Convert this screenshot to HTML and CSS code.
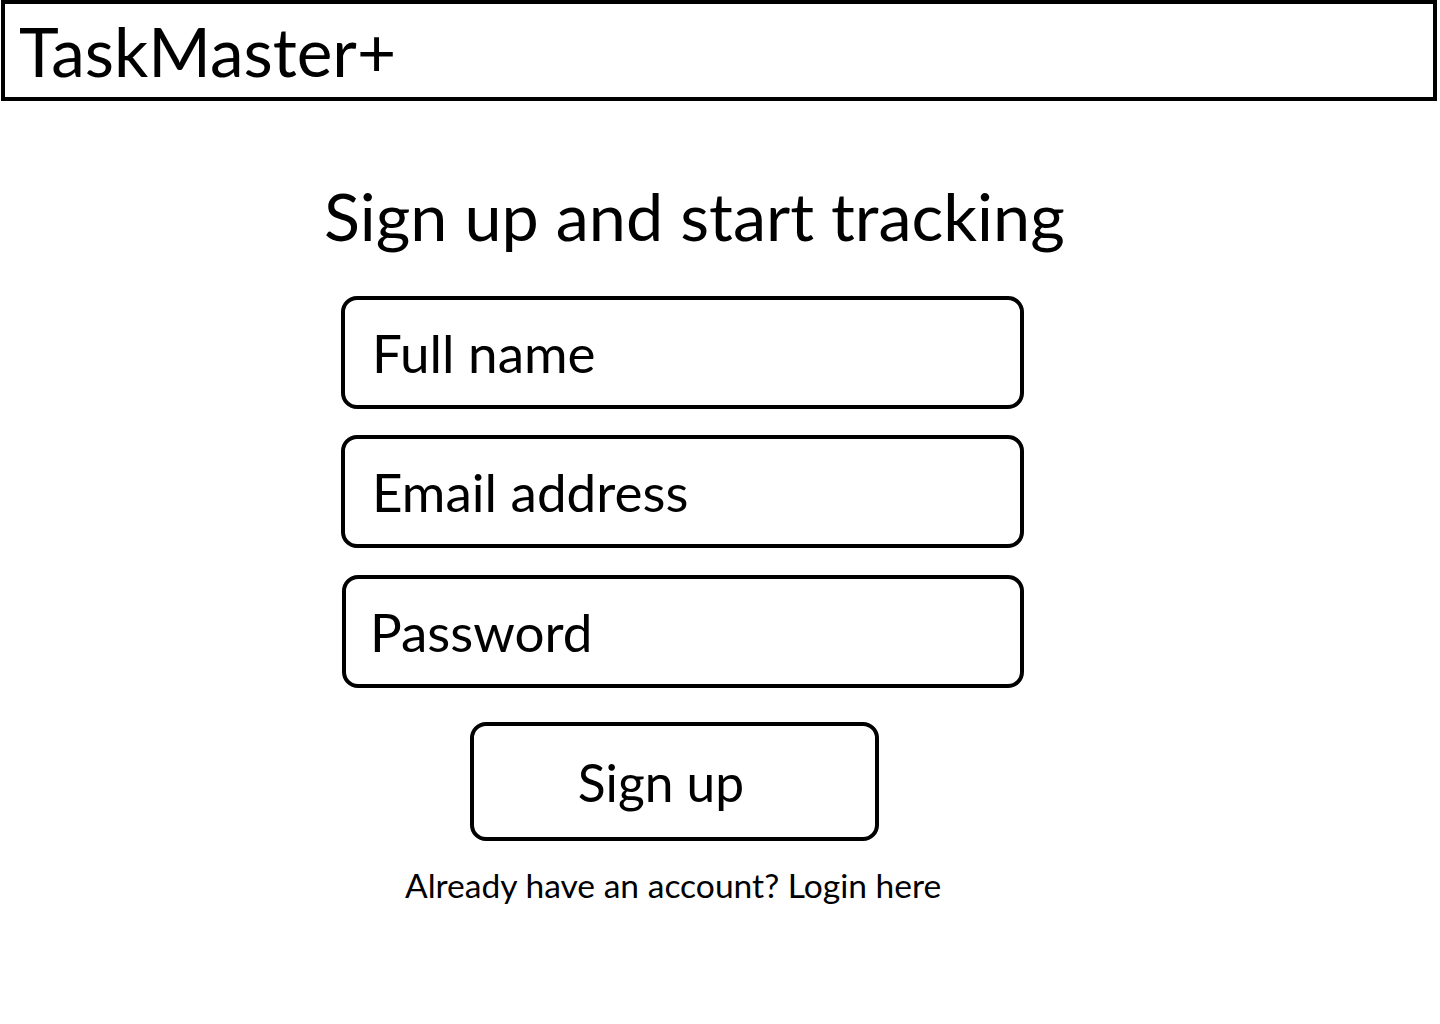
FILE: index.html
```html
<!DOCTYPE html>
<html lang="en">
<head>
<meta charset="utf-8">
<title>TaskMaster+ – Sign up</title>
<link rel="stylesheet" href="styles.css">
</head>
<body>
<header class="topbar">
  <div class="brand">TaskMaster+</div>
</header>
<main class="signup">
  <h1 class="signup-title">Sign up and start tracking</h1>
  <form class="signup-form">
    <div class="field">Full name</div>
    <div class="field">Email address</div>
    <div class="field field-shift">Password</div>
    <button class="btn" type="button">Sign up</button>
    <p class="login-hint">Already have an account? Login here</p>
  </form>
</main>
</body>
</html>
```
FILE: styles.css
```css
* { box-sizing: border-box; }
html, body { margin: 0; padding: 0; background: #fff; }
body {
  font-family: Lato, "Open Sans", "Liberation Sans", sans-serif;
  color: #000;
  width: 1440px;
  height: 1024px;
  overflow: hidden;
}
.topbar {
  margin: 0 3px 0 1px;
  height: 101px;
  border: 4px solid #000;
  display: flex;
  align-items: center;
  padding-left: 14px;
}
.brand {
  font-size: 67.5px;
  line-height: 1;
}
.signup {
  display: flex;
  flex-direction: column;
  padding-top: 75px;
}
.signup-title {
  margin: 0 0 0 324px;
  font-weight: 400;
  font-size: 66.5px;
  line-height: 1.2;
}
.signup-form {
  margin: 40px 0 0 341px;
  width: 683px;
  display: flex;
  flex-direction: column;
}
.field {
  height: 113px;
  border: 4px solid #000;
  border-radius: 16px;
  display: flex;
  align-items: center;
  padding-left: 27px;
  font-size: 53px;
  margin-bottom: 26.5px;
}
.field-shift { margin-left: 1px; padding-left: 24px; }
.btn {
  margin: 8px 0 0 129px;
  width: 409px;
  height: 119px;
  border: 4px solid #000;
  border-radius: 16px;
  background: #fff;
  font-family: inherit;
  font-size: 51.5px;
  color: #000;
  padding: 0 27px 0 0;
  display: flex;
  align-items: center;
  justify-content: center;
}
.login-hint {
  margin: 24px 0 0 64px;
  font-size: 33.6px;
  line-height: 1.2;
}
```
